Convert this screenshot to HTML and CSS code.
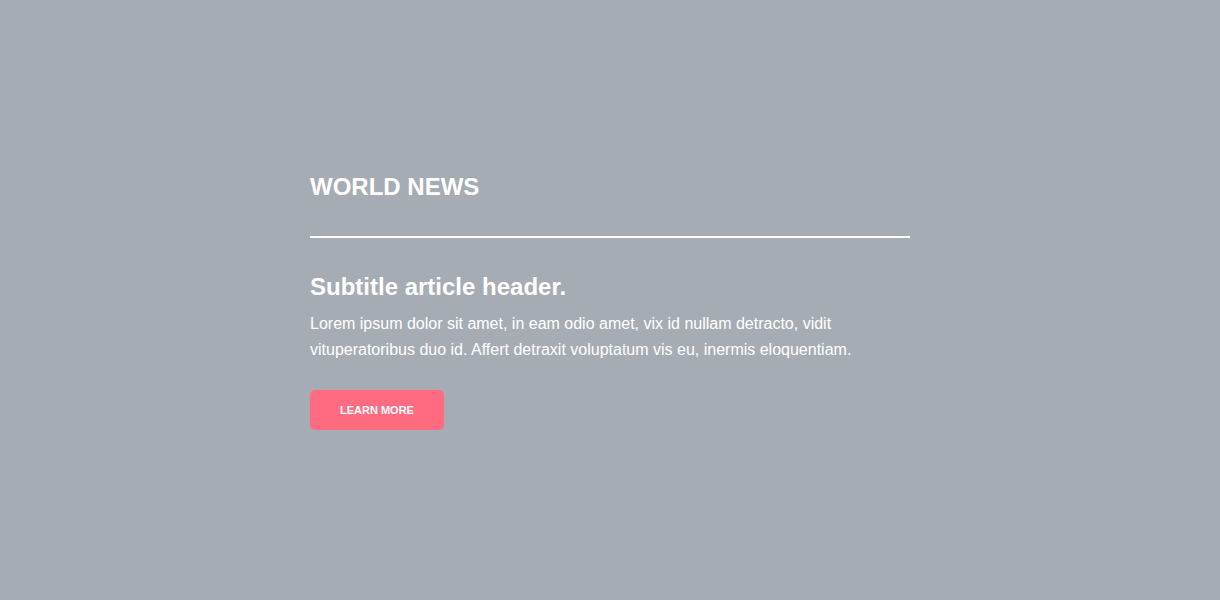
FILE: index.html
```html
<!DOCTYPE html>
<html lang="en">
<head>
<meta charset="utf-8">
<title>World News</title>
<link rel="stylesheet" href="styles.css">
</head>
<body>
<main class="page">
  <section class="card">
    <h1 class="title">WORLD NEWS</h1>
    <hr class="rule">
    <h2 class="subtitle">Subtitle article header.</h2>
    <p class="text">Lorem ipsum dolor sit amet, in eam odio amet, vix id nullam detracto, vidit vituperatoribus duo id. Affert detraxit voluptatum vis eu, inermis eloquentiam.</p>
    <a class="button" href="#">LEARN MORE</a>
  </section>
</main>
</body>
</html>
```

FILE: styles.css
```css
* { box-sizing: border-box; }
html, body {
  margin: 0;
  padding: 0;
  background: #a6acb4;
}
body {
  font-family: "Liberation Sans", Arial, Helvetica, sans-serif;
  color: #ffffff;
}
.page {
  min-height: 100vh;
  display: flex;
  align-items: center;
  justify-content: center;
}
.card {
  width: 600px;
  display: flex;
  flex-direction: column;
  align-items: flex-start;
  padding-top: 1px;
}
.title {
  margin: 0;
  font-size: 24px;
  line-height: 32px;
  font-weight: 700;
}
.rule {
  align-self: stretch;
  margin: 33px 0 0;
  border: 0;
  height: 2px;
  background: #ffffff;
}
.subtitle {
  margin: 33px 0 0;
  font-size: 24px;
  line-height: 32px;
  font-weight: 700;
}
.text {
  margin: 8px 0 0;
  font-size: 16px;
  line-height: 26px;
}
.button {
  margin-top: 27px;
  display: flex;
  align-items: center;
  justify-content: center;
  width: 134px;
  height: 40px;
  border-radius: 5px;
  background: #ff6b81;
  color: #ffffff;
  text-decoration: none;
  font-size: 11px;
  font-weight: 700;
}
```
